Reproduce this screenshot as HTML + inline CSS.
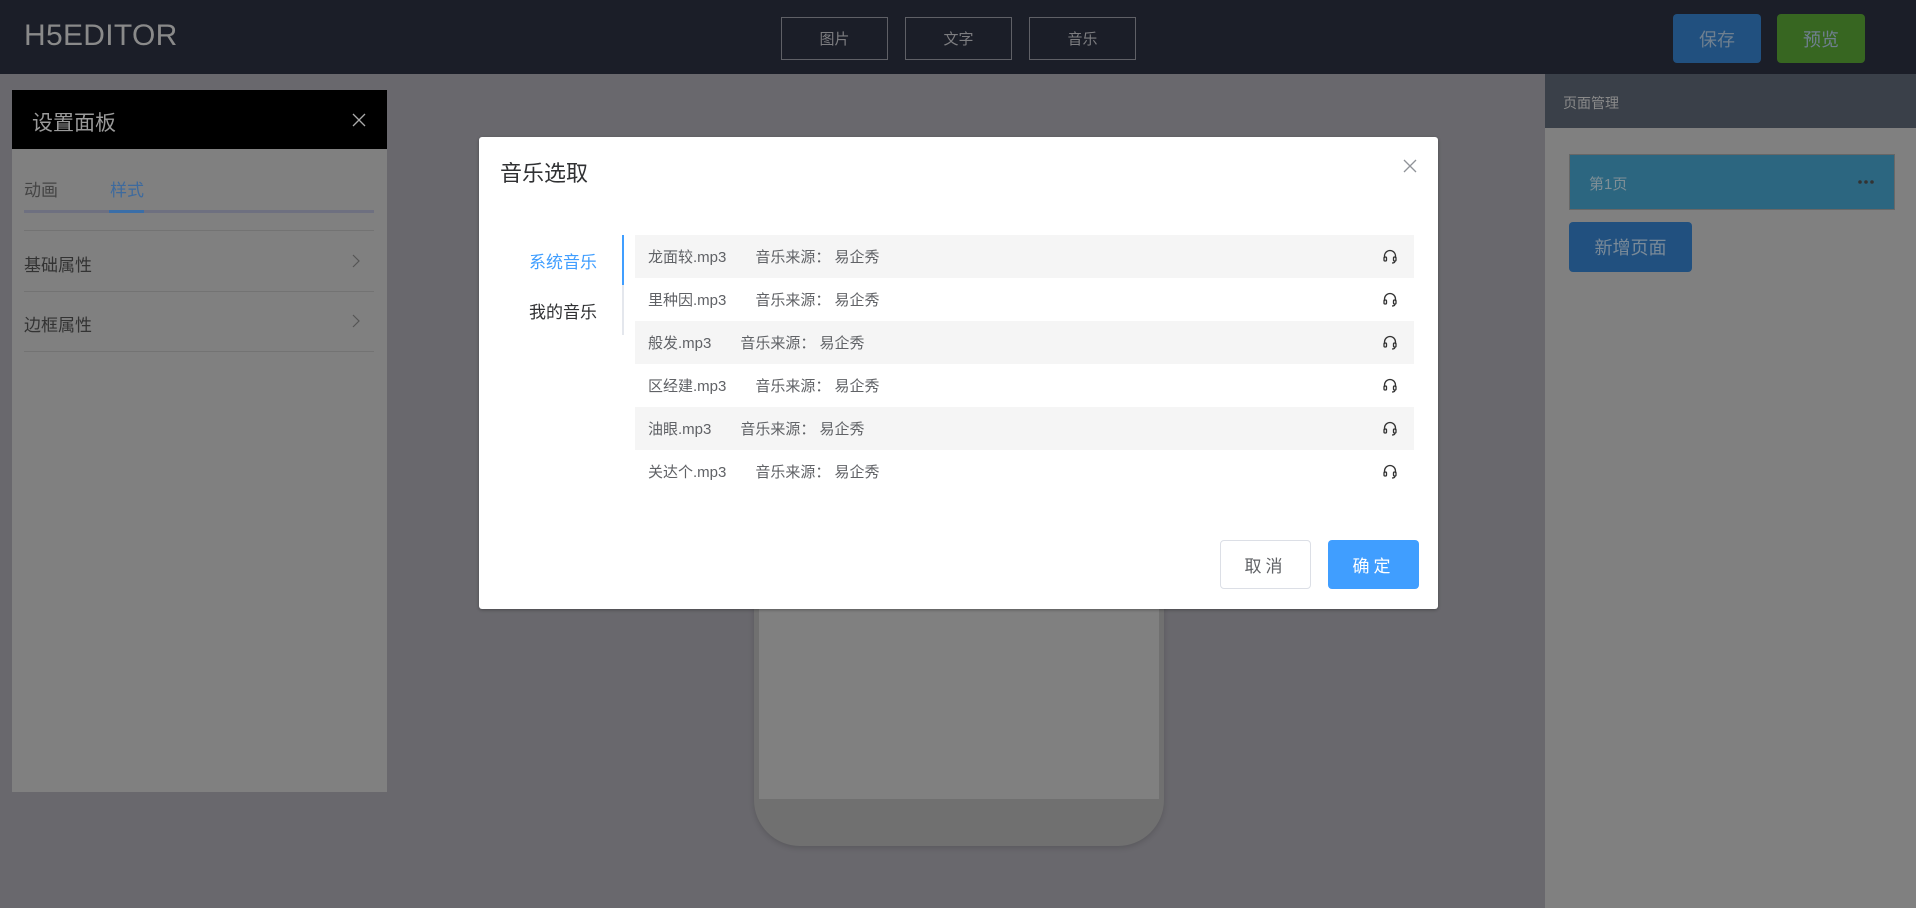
<!DOCTYPE html>
<html><head><meta charset="utf-8"><style>
*{margin:0;padding:0;box-sizing:border-box}
body{width:1916px;height:908px;overflow:hidden;background:#69686d;font-family:"Liberation Sans","Noto Sans CJK SC",sans-serif;position:relative}
.abs{position:absolute}
.hdr{left:0;top:0;width:1916px;height:74px;background:#1b1e28}
.logo{left:24px;top:19px;font-size:30px;color:#8a8a8a;letter-spacing:0.3px}
.tb{top:17px;height:43px;width:107px;border:1px solid #5f6066;color:#7d7d80;font-size:15px;display:flex;align-items:center;justify-content:center}
.bt{top:14px;height:49px;width:88px;border-radius:4px;color:#6f7f8f;font-size:18px;display:flex;align-items:center;justify-content:center}
.lp{left:12px;top:90px;width:375px;height:702px;background:#808080}
.lph{left:0;top:0;width:375px;height:59px;background:#000;color:#9a9a9a;font-size:21px;padding:17px 0 0 20px}
.line{left:12px;width:350px;height:1px;background:#737373}
.rp{left:1545px;top:74px;width:371px;height:834px;background:#808080}
.modal{left:479px;top:137px;width:959px;height:472px;background:#fff;border-radius:3px;box-shadow:0 1px 3px rgba(0,0,0,.3)}
.row{left:156px;width:779px;height:43px;font-size:15px;color:#606266;display:flex;align-items:center;padding-left:13px}
.src{margin-left:29px}
.hp{position:absolute;right:16px;top:13px}
</style></head><body>
<div class="abs hdr"></div>
<div class="abs logo">H5EDITOR</div>
<div class="abs tb" style="left:781px">图片</div>
<div class="abs tb" style="left:905px">文字</div>
<div class="abs tb" style="left:1029px">音乐</div>
<div class="abs bt" style="left:1673px;background:#21507f">保存</div>
<div class="abs bt" style="left:1777px;background:#376621">预览</div>

<div class="abs lp">
 <div class="abs lph">设置面板<svg style="position:absolute;left:340px;top:23px" width="14" height="14" viewBox="0 0 14 14" stroke="#aaa" stroke-width="1.3"><path d="M1 1L13 13M13 1L1 13"/></svg></div>
 <div class="abs" style="left:12px;top:86px;font-size:17px;color:#444">动画</div>
 <div class="abs" style="left:98px;top:86px;font-size:17px;color:#3d6a9e">样式</div>
 <div class="abs" style="left:12px;top:120px;width:350px;height:3px;background:#6e7080"></div>
 <div class="abs" style="left:97px;top:120px;width:35px;height:3px;background:#3a6ea8"></div>
 <div class="abs line" style="top:140px"></div>
 <div class="abs" style="left:12px;top:161px;font-size:17px;color:#333">基础属性</div>
 <svg class="abs" style="left:340px;top:164px" width="8" height="14" viewBox="0 0 8 14" fill="none" stroke="#555" stroke-width="1.2"><path d="M1 1L7 7L1 13"/></svg>
 <div class="abs line" style="top:201px"></div>
 <div class="abs" style="left:12px;top:221px;font-size:17px;color:#333">边框属性</div>
 <svg class="abs" style="left:340px;top:224px" width="8" height="14" viewBox="0 0 8 14" fill="none" stroke="#555" stroke-width="1.2"><path d="M1 1L7 7L1 13"/></svg>
 <div class="abs line" style="top:261px"></div>
</div>

<div class="abs" style="left:754px;top:560px;width:410px;height:286px;background:#707070;border-radius:0 0 46px 46px;box-shadow:0 2px 6px rgba(0,0,0,.15)"></div>
<div class="abs" style="left:759px;top:560px;width:400px;height:239px;background:#808080"></div>

<div class="abs rp">
 <div class="abs" style="left:0;top:0;width:371px;height:54px;background:#3a4049;color:#8a8a8a;font-size:14px;padding:19px 0 0 18px">页面管理</div>
 <div class="abs" style="left:24px;top:80px;width:326px;height:56px;background:#2c6680;border:1px solid #676767;color:#7f8f96;font-size:15px;padding:18px 0 0 19px">第1页<svg style="position:absolute;right:20px;top:25px" width="16" height="4" viewBox="0 0 16 4" fill="#333"><circle cx="2" cy="2" r="1.8"/><circle cx="8" cy="2" r="1.8"/><circle cx="14" cy="2" r="1.8"/></svg></div>
 <div class="abs" style="left:24px;top:148px;width:123px;height:50px;background:#21507f;border-radius:4px;color:#7a8a98;font-size:18px;display:flex;align-items:center;justify-content:center">新增页面</div>
</div>

<div class="abs modal">
 <div class="abs" style="left:21px;top:19px;font-size:22px;color:#303133">音乐选取</div>
 <svg class="abs" style="left:924px;top:22px" width="14" height="14" viewBox="0 0 14 14" stroke="#909399" stroke-width="1.3"><path d="M1 1L13 13M13 1L1 13"/></svg>
 <div class="abs" style="left:50px;top:111px;font-size:17px;color:#409eff">系统音乐</div>
 <div class="abs" style="left:50px;top:161px;font-size:17px;color:#303133">我的音乐</div>
 <div class="abs" style="left:143px;top:98px;width:2px;height:100px;background:#e4e7ed"></div>
 <div class="abs" style="left:143px;top:98px;width:2px;height:50px;background:#409eff"></div>
 <div class="abs" style="left:0;top:98px;width:959px;height:258px">
  <div class="abs row" style="top:0;background:#f5f5f5">龙面较.mp3<span class="src">音乐来源： 易企秀</span><svg class="hp" width="16" height="16" viewBox="0 0 16 16" fill="none" stroke="#333" stroke-width="1.3"><path d="M2.5 10V8a5.5 5.5 0 0111 0v2"/><rect x="2" y="9" width="2.5" height="4" rx="1"/><rect x="11.5" y="9" width="2.5" height="4" rx="1"/><path d="M13 13q0 2-3 2"/></svg></div>
  <div class="abs row" style="top:43px;background:#fff">里种因.mp3<span class="src">音乐来源： 易企秀</span><svg class="hp" width="16" height="16" viewBox="0 0 16 16" fill="none" stroke="#333" stroke-width="1.3"><path d="M2.5 10V8a5.5 5.5 0 0111 0v2"/><rect x="2" y="9" width="2.5" height="4" rx="1"/><rect x="11.5" y="9" width="2.5" height="4" rx="1"/><path d="M13 13q0 2-3 2"/></svg></div>
  <div class="abs row" style="top:86px;background:#f5f5f5">般发.mp3<span class="src">音乐来源： 易企秀</span><svg class="hp" width="16" height="16" viewBox="0 0 16 16" fill="none" stroke="#333" stroke-width="1.3"><path d="M2.5 10V8a5.5 5.5 0 0111 0v2"/><rect x="2" y="9" width="2.5" height="4" rx="1"/><rect x="11.5" y="9" width="2.5" height="4" rx="1"/><path d="M13 13q0 2-3 2"/></svg></div>
  <div class="abs row" style="top:129px;background:#fff">区经建.mp3<span class="src">音乐来源： 易企秀</span><svg class="hp" width="16" height="16" viewBox="0 0 16 16" fill="none" stroke="#333" stroke-width="1.3"><path d="M2.5 10V8a5.5 5.5 0 0111 0v2"/><rect x="2" y="9" width="2.5" height="4" rx="1"/><rect x="11.5" y="9" width="2.5" height="4" rx="1"/><path d="M13 13q0 2-3 2"/></svg></div>
  <div class="abs row" style="top:172px;background:#f5f5f5">油眼.mp3<span class="src">音乐来源： 易企秀</span><svg class="hp" width="16" height="16" viewBox="0 0 16 16" fill="none" stroke="#333" stroke-width="1.3"><path d="M2.5 10V8a5.5 5.5 0 0111 0v2"/><rect x="2" y="9" width="2.5" height="4" rx="1"/><rect x="11.5" y="9" width="2.5" height="4" rx="1"/><path d="M13 13q0 2-3 2"/></svg></div>
  <div class="abs row" style="top:215px;background:#fff">关达个.mp3<span class="src">音乐来源： 易企秀</span><svg class="hp" width="16" height="16" viewBox="0 0 16 16" fill="none" stroke="#333" stroke-width="1.3"><path d="M2.5 10V8a5.5 5.5 0 0111 0v2"/><rect x="2" y="9" width="2.5" height="4" rx="1"/><rect x="11.5" y="9" width="2.5" height="4" rx="1"/><path d="M13 13q0 2-3 2"/></svg></div>
 </div>
 <div class="abs" style="left:741px;top:403px;width:91px;height:49px;border:1px solid #dcdfe6;border-radius:4px;color:#606266;font-size:17px;display:flex;align-items:center;justify-content:center;letter-spacing:4px">取消</div>
 <div class="abs" style="left:849px;top:403px;width:91px;height:49px;background:#409eff;border-radius:4px;color:#fff;font-size:17px;display:flex;align-items:center;justify-content:center;letter-spacing:4px">确定</div>
</div>
</body></html>
